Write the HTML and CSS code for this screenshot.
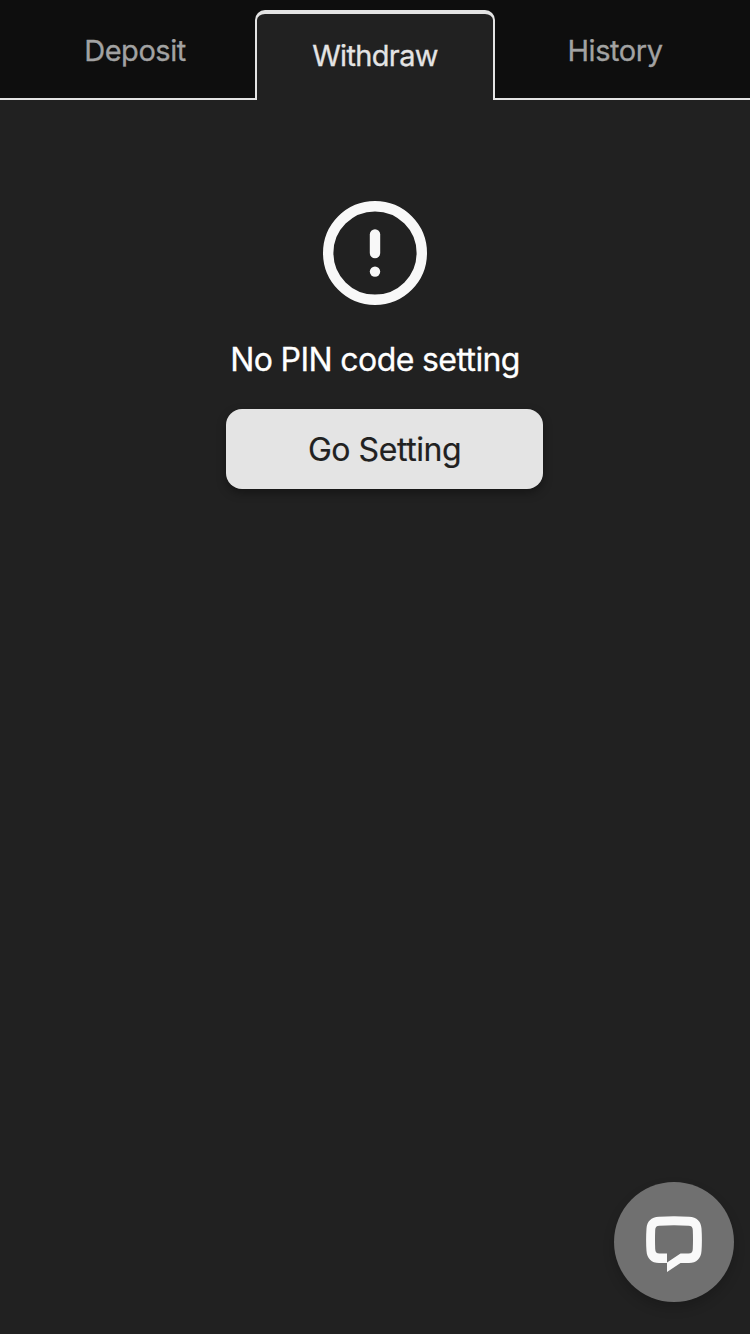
FILE: index.html
```html
<!DOCTYPE html>
<html lang="en">
<head>
<meta charset="utf-8">
<title>Withdraw</title>
<link rel="stylesheet" href="styles.css">
</head>
<body>
<nav class="tabs">
  <a class="tab tab-deposit">Deposit</a>
  <a class="tab tab-active">Withdraw</a>
  <a class="tab tab-history">History</a>
</nav>
<main class="notice">
  <svg class="notice-icon" viewBox="0 0 104 104" fill="none" stroke="#f8f8f8" stroke-width="10.4" stroke-linecap="round">
    <circle cx="52" cy="52" r="46.8"/>
    <path d="M52 33.4V52"/>
    <circle cx="52" cy="70.6" r="5.2" fill="#f8f8f8" stroke="none"/>
  </svg>
  <p class="notice-text">No PIN code setting</p>
  <button class="notice-button" type="button">Go Setting</button>
</main>
<button class="chat" type="button" aria-label="Chat">
  <svg class="chat-icon" viewBox="0 0 56 56" fill="#f9f9f9">
    <path fill-rule="evenodd" d="M13 .8Q28-.4 43 .8C51 1.300 55 5.500 55.500 12.500Q56.300 24 55.500 35C55 42.500 50.500 47 43 47H34.500L21 56V47H13C5.500 47 1 42.500.500 35Q-.3 24 .500 12.500C1 5.500 5 1.300 13 .8ZM13.500 9.700C10.500 9.800 9.300 11 9.200 14Q8.800 23.500 9.200 33C9.300 36 10.500 37.500 13.500 37.500H21V46.500L34.500 37.500H42.500C45.500 37.500 46.700 36 46.800 33Q47.200 23.500 46.800 14C46.700 11 45.500 9.800 42.500 9.700Q28 8.900 13.500 9.700Z"/>
  </svg>
</button>
</body>
</html>
```
FILE: styles.css
```css
* {
  box-sizing: border-box;
}

body {
  margin: 0;
  min-height: 1334px;
  background: #212121;
  color: #fff;
  font-family: Inter, "Liberation Sans", sans-serif;
}

.tabs {
  display: grid;
  grid-template-columns: 255px 240px 255px;
  height: 100px;
  padding-top: 10px;
  background: #0e0e0e;
}

.tab {
  display: flex;
  justify-content: center;
  align-items: center;
  border-bottom: 2px solid #e4e4e4;
  color: #a2a2a2;
  font-size: 29px;
  letter-spacing: -.45px;
  -webkit-text-stroke: .3px currentColor;
  line-height: 40px;
  padding-bottom: 6px;
}

.tab-deposit {
  padding-left: 15px;
}

.tab-history {
  padding-right: 15px;
}

.tab-active {
  padding-bottom: 2px;
  border: 2px solid #e4e4e4;
  border-top-width: 4px;
  border-bottom: 0;
  border-radius: 10px 10px 0 0;
  background: #212121;
  color: #e4e4e4;
  letter-spacing: -.65px;
}

.notice {
  display: flex;
  flex-direction: column;
  align-items: center;
  padding-top: 101px;
}

.notice-icon {
  width: 104px;
  height: 104px;
}

.notice-text {
  margin: 35px 0 29px;
  font-size: 32px;
  letter-spacing: -.6px;
  -webkit-text-stroke: .3px currentColor;
  line-height: 40px;
}

.notice-button {
  width: 317px;
  height: 80px;
  margin-left: 19px;
  padding: 1px 0 0;
  border: 0;
  border-radius: 16px;
  background: #e4e4e4;
  color: #212121;
  font: 32px Inter, "Liberation Sans", sans-serif;
  letter-spacing: -.45px;
  -webkit-text-stroke: .2px currentColor;
  box-shadow: 0 4px 10px rgba(0, 0, 0, .35);
}

.chat {
  position: fixed;
  right: 16px;
  bottom: 32px;
  display: flex;
  align-items: center;
  justify-content: center;
  width: 120px;
  height: 120px;
  padding: 4px 0 0;
  border: 0;
  border-radius: 50%;
  background: #707070;
  box-shadow: 0 6px 12px rgba(0, 0, 0, .18);
}

.chat-icon {
  width: 56px;
  height: 56px;
}
```
